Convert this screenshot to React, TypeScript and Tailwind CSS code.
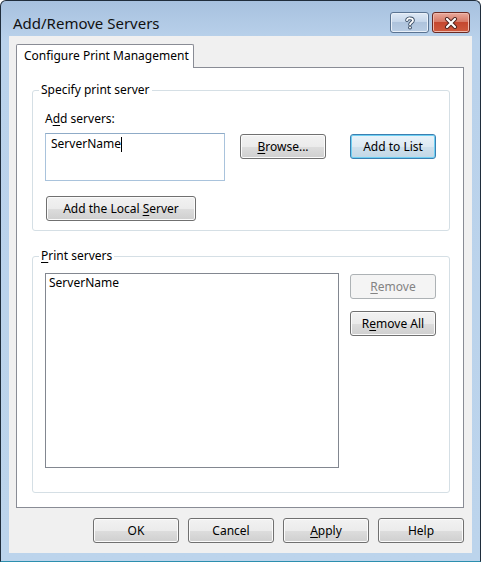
import type { ReactNode } from 'react'

// ---------------------------------------------------------------------------
// Win7 basic dialog — Add/Remove Servers
// ---------------------------------------------------------------------------

const font = "font-['Noto_Sans',sans-serif]"

interface BtnProps {
  children: ReactNode
  className?: string
  variant?: 'normal' | 'default' | 'disabled'
}

function Btn({ children, className, variant = 'normal' }: BtnProps) {
  const look =
    variant === 'default'
      ? 'border-[#3c7fb1] bg-[linear-gradient(to_bottom,#e9f3fa,#dde9f2_50%,#cfe0ec_51%,#c2d7e6)] shadow-[inset_0_0_0_1px_#6fd0f3] text-black'
      : variant === 'disabled'
        ? 'border-[#adb2b5] bg-[#f4f4f4] text-[#838383]'
        : 'border-[#707070] bg-[linear-gradient(to_bottom,#f2f2f2,#ebebeb_50%,#dddddd_51%,#cfcfcf)] shadow-[inset_0_0_0_1px_#fbfbfb] text-black'
  return (
    <div
      className={`flex h-[25px] w-[86px] items-center justify-center rounded-[3px] border text-[12px] leading-[16px] ${look} ${className ?? ''}`}
    >
      <span>{children}</span>
    </div>
  )
}

function U({ children }: { children: ReactNode }) {
  return <span className="underline underline-offset-[2px]">{children}</span>
}

function HelpButton() {
  return (
    <div className="flex h-[21px] w-[39px] items-center justify-center rounded-[3px] border border-[#5a7391] bg-[linear-gradient(to_bottom,#dfe9f5,#c5d6ea_45%,#aec3dc_50%,#b9cde4)] shadow-[inset_0_0_0_1px_#e9f0f8]">
      <svg width="12" height="14" viewBox="0 0 12 14">
        <path d="M3 4.2 C3 1.6 9 1.6 9 4.4 C9 6.4 6 6.6 6 8.6" fill="none" stroke="#3a4d64" strokeWidth="3.6" strokeLinecap="round" />
        <circle cx="6" cy="11.6" r="1.9" fill="#3a4d64" />
        <path d="M3 4.2 C3 1.6 9 1.6 9 4.4 C9 6.4 6 6.6 6 8.6" fill="none" stroke="#ffffff" strokeWidth="1.8" strokeLinecap="round" />
        <circle cx="6" cy="11.6" r="1" fill="#ffffff" />
      </svg>
    </div>
  )
}

function CloseButton() {
  return (
    <div className="flex h-[21px] w-[38px] items-center justify-center rounded-[3px] border border-[#6b2a22] bg-[linear-gradient(to_bottom,#e9a99b,#d77a67_45%,#c5472f_50%,#cf5a3e)] shadow-[inset_0_0_0_1px_#efb9ad]">
      <svg width="14" height="12" viewBox="0 0 14 12">
        <path d="M3 2 L11 10 M11 2 L3 10" stroke="#4b211c" strokeWidth="4" strokeLinecap="round" />
        <path d="M3 2 L11 10 M11 2 L3 10" stroke="#ffffff" strokeWidth="2.2" strokeLinecap="round" />
      </svg>
    </div>
  )
}

export default function App() {
  return (
    <div className={`${font} h-[562px] w-[481px] overflow-hidden bg-white text-[12px] text-black`}>
      <div className="flex h-[562px] w-[481px] flex-col rounded-t-[6px] border border-[#1f2d3c] border-b-[#2c8fae] bg-[linear-gradient(to_bottom,#a7c1df,#bad2eb_40px,#bcd4ec)]">
        {/* Title bar */}
        <div className="flex h-[35px] shrink-0 items-start">
          <div className="pl-[12px] pt-[12px] text-[15px] leading-[20px] text-[#111]">Add/Remove Servers</div>
          <div className="ml-auto mr-[10px] mt-[11px] flex gap-[3px]">
            <HelpButton />
            <CloseButton />
          </div>
        </div>

        {/* Client area */}
        <div className="mx-[8px] flex h-[517px] flex-col bg-[#f0f0f0] pl-[7px] pr-[8px] pt-[8px]">
          {/* Tab header */}
          <div className="flex">
            <div className="relative z-10 -mb-px h-[24px] w-[178px] rounded-t-[2px] border border-b-0 border-[#898c95] bg-white pl-[7px] pt-[3px] leading-[16px]">
              Configure Print Management
            </div>
          </div>

          {/* Tab panel */}
          <div className="h-[441px] w-[448px] border border-[#898c95] bg-white px-[15px]">
            {/* Specify print server */}
            <fieldset className="mt-[14px] h-[149px] w-[418px] rounded-[3px] border border-[#d5dfe5] p-0">
              <legend className="ml-[6px] px-[2px] leading-[16px]">Specify print server</legend>
              <div className="pl-[12px] pt-[13px]">
                <div className="leading-[16px]">
                  A<U>d</U>d servers:
                </div>
                <div className="mt-[6px] flex items-start">
                  <div className="flex h-[48px] w-[180px] items-start border border-[#a9c3dc] border-t-[#8fabc7] pl-[5px] pt-[2px] leading-[16px]">
                    <span>ServerName</span>
                    <span className="mt-[1px] h-[15px] w-px bg-black" />
                  </div>
                  <Btn className="ml-[15px] mt-[1px]">
                    <U>B</U>rowse...
                  </Btn>
                  <Btn className="ml-[24px] mt-[1px]" variant="default">
                    Add to List
                  </Btn>
                </div>
                <Btn className="ml-[1px] mt-[15px] w-[150px]">
                  Add the Local <U>S</U>erver
                </Btn>
              </div>
            </fieldset>

            {/* Print servers */}
            <fieldset className="mt-[17px] h-[245px] w-[418px] rounded-[3px] border border-[#d5dfe5] p-0">
              <legend className="ml-[6px] px-[2px] leading-[16px]">
                <U>P</U>rint servers
              </legend>
              <div className="flex items-start pl-[12px] pt-[9px]">
                <div className="h-[195px] w-[294px] border border-[#828790] pl-[3px] pt-[1px] leading-[16px]">
                  ServerName
                </div>
                <div className="ml-[11px] mt-[1px] flex flex-col gap-[12px]">
                  <Btn variant="disabled">
                    <U>R</U>emove
                  </Btn>
                  <Btn>
                    R<U>e</U>move All
                  </Btn>
                </div>
              </div>
            </fieldset>
          </div>

          {/* Dialog buttons */}
          <div className="mt-[10px] flex justify-end gap-[9px]">
            <Btn>OK</Btn>
            <Btn>Cancel</Btn>
            <Btn>
              <U>A</U>pply
            </Btn>
            <Btn>Help</Btn>
          </div>
        </div>
      </div>
    </div>
  )
}
